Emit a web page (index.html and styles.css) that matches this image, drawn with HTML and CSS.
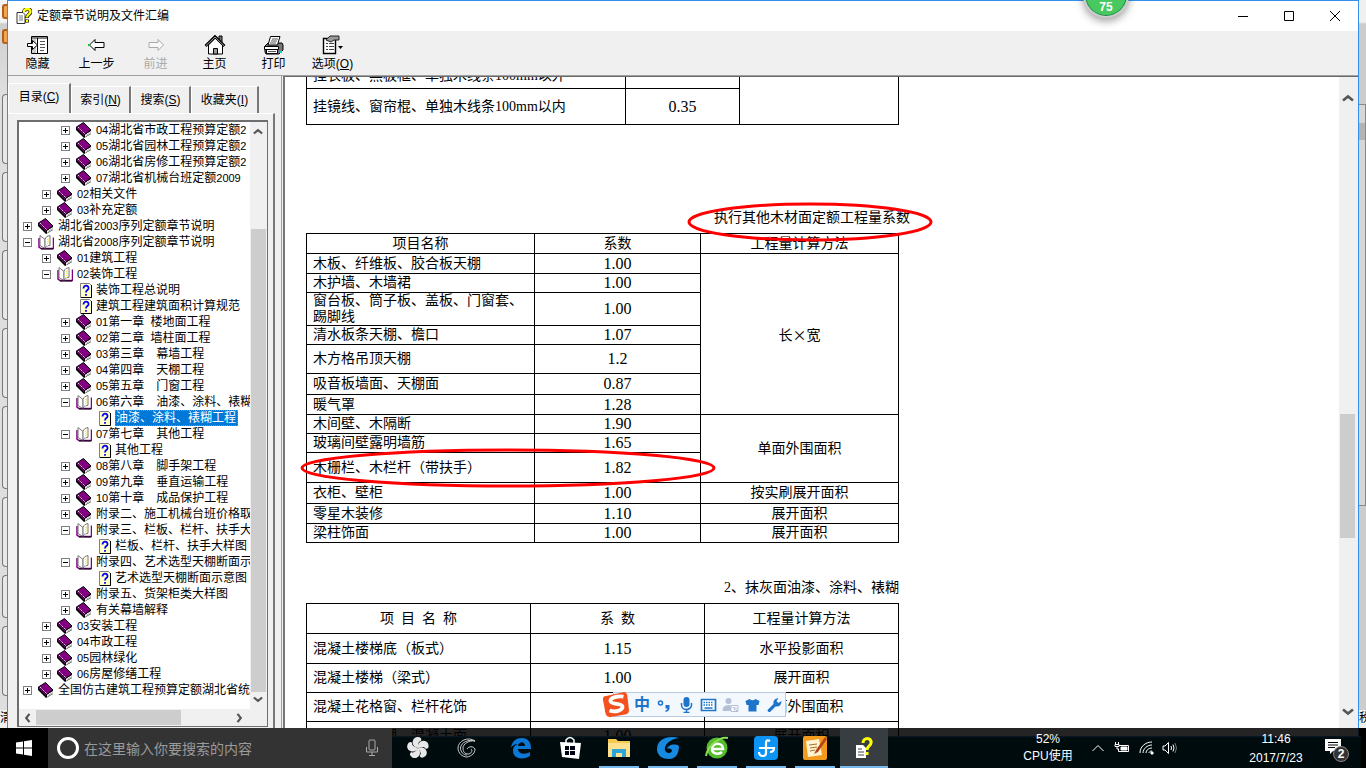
FILE: index.html
```html
<!DOCTYPE html>
<html lang="zh-CN">
<head>
<meta charset="utf-8">
<title>定额章节说明及文件汇编</title>
<link rel="stylesheet" href="styles.css">
</head>
<body>
<svg class="defs" aria-hidden="true">
  <symbol id="book" viewBox="0 0 16 16">
    <path d="M0 5v3l8 8 7-4V8z" fill="#000"/>
    <path d="M9 12.500l6-3.500v2.500L9 15z" fill="#fff"/>
    <path d="M10 13.500l5-3" stroke="#888" stroke-width=".7"/>
    <path d="M.5 5L7.500.5 15 8l-6.500 4.500z" fill="#800080" stroke="#000"/>
    <path d="M1 6.500l7 7.500v-1.500L1 5z" fill="#800080"/>
    <path d="M2 5l7 7" stroke="#fff" stroke-width=".9" stroke-dasharray="1.300 1"/>
  </symbol>
  <symbol id="open" viewBox="0 0 16 16">
    <path d="M1 4v9l2 1.500h12.500V3.500" fill="#fff" stroke="#800080" stroke-width="1.500"/>
    <path d="M2 1.500l5 4v9l-5-3z" fill="#fff" stroke="#777"/>
    <path d="M7 5.500c1-3 2-3 5-4v10c-3 0-4 .500-5 3z" fill="#fff" stroke="#777"/>
    <path d="M9.500 5v7M10.500 4.500v6" stroke="#f0e650" stroke-dasharray="1 1"/>
    <path d="M3 15h12" stroke="#000"/>
  </symbol>
  <symbol id="page" viewBox="0 0 16 16">
    <path d="M4.500 1.500h9l2 2v12h-11z" fill="#ffffc8" stroke="#808080"/>
    <path d="M15.500 3v12.500H5" fill="none" stroke="#000"/>
    <path d="M7.500 6.500c0-4 5.500-3.500 5 0-.3 1.800-2.500 1.500-2.500 4M10 12v1.800" fill="none" stroke="#00f" stroke-width="1.800"/>
  </symbol>
  <symbol id="help" viewBox="0 0 16 16">
    <path d="M1 4.500h6l2 2v9H1z" fill="#fff" stroke="#333"/>
    <path d="M3 8h4M3 10h4M3 12h4" stroke="#777"/>
    <path d="M8 4c0-4 7-4 6.500 0-.3 2.500-3.500 2.500-3.500 6M11 11.500v3" fill="none" stroke="#000" stroke-width="3.800"/>
    <path d="M8 4c0-4 7-4 6.500 0-.3 2.500-3.500 2.500-3.500 5.500M11 12v2" fill="none" stroke="#ff0" stroke-width="2.400"/>
  </symbol>
  <symbol id="up" viewBox="0 0 12 8"><path d="M1 7l5-4 5 4" fill="none" stroke="#555" stroke-width="2.600"/></symbol>
  <symbol id="mic" viewBox="0 0 14 18">
    <rect x="4" y="1" width="6" height="10" rx="1"/><path d="M1.500 8v5h11V8M7 13v4M4 16.500h6" fill="none"/>
  </symbol>
</svg>

<div class="desktop">
  <div class="back back-left">
    <i class="chip"></i><i class="chip"></i>
    <div class="slots"><i></i><i></i><i></i><i></i><i class="tall"></i><i></i><i class="short"></i><i></i></div>
    <span class="cut">清</span>
  </div>

  <main class="window">
    <header class="titlebar">
      <svg class="i16"><use href="#help"/></svg>
      <h1>定额章节说明及文件汇编</h1>
      <div class="winbtns">
        <button aria-label="最小化"><svg viewBox="0 0 12 12"><path d="M1 6.500h10"/></svg></button>
        <button aria-label="最大化"><svg viewBox="0 0 12 12"><path d="M1.500 1.500h9v9h-9z"/></svg></button>
        <button aria-label="关闭"><svg viewBox="0 0 12 12"><path d="M1 1l10 10M11 1L1 11"/></svg></button>
      </div>
    </header>

    <nav class="toolbar">
      <button><svg viewBox="0 0 22 20"><path d="M4.500 1.500h16v17h-16z" fill="#fff" stroke="#000"/><path d="M5 3h15M10.500 3v15" stroke="#000"/><path d="M6 3v15M8 3v15" stroke="#999"/><path d="M13 6.500h5M13 9.500h5M13 12.500h5M13 15.500h4" stroke="#555"/><path d="M.5 8.500h5v-3l5 4.500-5 4.500v-3h-5z" fill="#fff" stroke="#000"/></svg><span>隐藏</span></button>
      <button><svg viewBox="0 0 22 20"><path d="M3.500 10l5.500-5.500v3h9v5H9v3z" fill="#fff" stroke="#000"/><path d="M2 9h2v2H2z" fill="#0c2"/></svg><span>上一步</span></button>
      <button disabled><svg viewBox="0 0 22 20"><path d="M18.500 10L13 4.500v3H4v5h9v3z" fill="#f8f8f8" stroke="#aaa"/></svg><span>前进</span></button>
      <button><svg viewBox="0 0 22 20"><path d="M15 1h3v8h-3z" fill="#777" stroke="#000"/><path d="M4.500 10v9h14v-9L11.500 3z" fill="#fff" stroke="#000"/><path d="M1.500 11L11 1.500l9.500 9.500" fill="none" stroke="#000" stroke-width="2.600"/><path d="M2 10.700L11 2l9 8.700" fill="none" stroke="#999"/><path d="M9.500 13.500h4V19h-4z" fill="#999" stroke="#000"/></svg><span>主页</span></button>
      <button><svg viewBox="0 0 22 20"><path d="M2 11l3-3h14l1 2v5l-4 4H3l-1-2z" fill="#777" stroke="#000"/><path d="M1.500 11.500h14v3h-14zM3.500 14.500h11v4h-11z" fill="#fff" stroke="#000"/><path d="M5 10L7.500 1.500H17L14.500 10z" fill="#fff" stroke="#000"/><path d="M9 4h6M8 6h6M7 8h6M5 16.500h8" stroke="#555"/><path d="M17 16h2v2h-2z" fill="#0dd"/></svg><span>打印</span></button>
      <button><svg viewBox="0 0 22 20"><path d="M1.500 3.500h12v15h-12z" fill="#fff" stroke="#000" stroke-width="1.400"/><path d="M4 8.500h2M7 8.500h5M4 11.500h2M7 11.500h5M4 14.500h2M7 14.500h5" stroke="#444"/><path d="M4 5l4-4h9v4h-5L9 7z" fill="#999" stroke="#222"/><path d="M16 11h5l-2.500 3z"/></svg><span>选项(<u>O</u>)</span></button>
    </nav>

    <div class="panes">
      <aside class="side">
        <div class="tabs" role="tablist">
          <button role="tab" aria-selected="true">目录(<u>C</u>)</button>
          <button role="tab">索引(<u>N</u>)</button>
          <button role="tab">搜索(<u>S</u>)</button>
          <button role="tab">收藏夹(<u>I</u>)</button>
        </div>
        <div class="tabpanel">
          <div class="treebox">
            <ul class="tree">
              <li class="l2"><button class="ex plus"></button><svg><use href="#book"/></svg><span><b>04</b>湖北省市政工程预算定额<b>2</b></span></li>
              <li class="l2"><button class="ex plus"></button><svg><use href="#book"/></svg><span><b>05</b>湖北省园林工程预算定额<b>2</b></span></li>
              <li class="l2"><button class="ex plus"></button><svg><use href="#book"/></svg><span><b>06</b>湖北省房修工程预算定额<b>2</b></span></li>
              <li class="l2"><button class="ex plus"></button><svg><use href="#book"/></svg><span><b>07</b>湖北省机械台班定额<b>2009</b></span></li>
              <li class="l1"><button class="ex plus"></button><svg><use href="#book"/></svg><span><b>02</b>相关文件</span></li>
              <li class="l1"><button class="ex plus"></button><svg><use href="#book"/></svg><span><b>03</b>补充定额</span></li>
              <li><button class="ex plus"></button><svg><use href="#book"/></svg><span>湖北省<b>2003</b>序列定额章节说明</span></li>
              <li><button class="ex"></button><svg><use href="#open"/></svg><span>湖北省<b>2008</b>序列定额章节说明</span></li>
              <li class="l1"><button class="ex plus"></button><svg><use href="#book"/></svg><span><b>01</b>建筑工程</span></li>
              <li class="l1"><button class="ex"></button><svg><use href="#open"/></svg><span><b>02</b>装饰工程</span></li>
              <li class="l2 leaf"><svg><use href="#page"/></svg><span>装饰工程总说明</span></li>
              <li class="l2 leaf"><svg><use href="#page"/></svg><span>建筑工程建筑面积计算规范</span></li>
              <li class="l2"><button class="ex plus"></button><svg><use href="#book"/></svg><span><b>01</b>第一章<b>&nbsp; </b>楼地面工程</span></li>
              <li class="l2"><button class="ex plus"></button><svg><use href="#book"/></svg><span><b>02</b>第二章<b>&nbsp; </b>墙柱面工程</span></li>
              <li class="l2"><button class="ex plus"></button><svg><use href="#book"/></svg><span><b>03</b>第三章　幕墙工程</span></li>
              <li class="l2"><button class="ex plus"></button><svg><use href="#book"/></svg><span><b>04</b>第四章　天棚工程</span></li>
              <li class="l2"><button class="ex plus"></button><svg><use href="#book"/></svg><span><b>05</b>第五章　门窗工程</span></li>
              <li class="l2"><button class="ex"></button><svg><use href="#open"/></svg><span><b>06</b>第六章　油漆、涂料、裱糊</span></li>
              <li class="l3 leaf"><svg><use href="#page"/></svg><span class="selected">油漆、涂料、裱糊工程</span></li>
              <li class="l2"><button class="ex"></button><svg><use href="#open"/></svg><span><b>07</b>第七章　其他工程</span></li>
              <li class="l3 leaf"><svg><use href="#page"/></svg><span>其他工程</span></li>
              <li class="l2"><button class="ex plus"></button><svg><use href="#book"/></svg><span><b>08</b>第八章　脚手架工程</span></li>
              <li class="l2"><button class="ex plus"></button><svg><use href="#book"/></svg><span><b>09</b>第九章　垂直运输工程</span></li>
              <li class="l2"><button class="ex plus"></button><svg><use href="#book"/></svg><span><b>10</b>第十章　成品保护工程</span></li>
              <li class="l2"><button class="ex plus"></button><svg><use href="#book"/></svg><span>附录二、施工机械台班价格取</span></li>
              <li class="l2"><button class="ex"></button><svg><use href="#open"/></svg><span>附录三、栏板、栏杆、扶手大</span></li>
              <li class="l3 leaf"><svg><use href="#page"/></svg><span>栏板、栏杆、扶手大样图</span></li>
              <li class="l2"><button class="ex"></button><svg><use href="#open"/></svg><span>附录四、艺术选型天棚断面示</span></li>
              <li class="l3 leaf"><svg><use href="#page"/></svg><span>艺术选型天棚断面示意图</span></li>
              <li class="l2"><button class="ex plus"></button><svg><use href="#book"/></svg><span>附录五、货架柜类大样图</span></li>
              <li class="l2"><button class="ex plus"></button><svg><use href="#book"/></svg><span>有关幕墙解释</span></li>
              <li class="l1"><button class="ex plus"></button><svg><use href="#book"/></svg><span><b>03</b>安装工程</span></li>
              <li class="l1"><button class="ex plus"></button><svg><use href="#book"/></svg><span><b>04</b>市政工程</span></li>
              <li class="l1"><button class="ex plus"></button><svg><use href="#book"/></svg><span><b>05</b>园林绿化</span></li>
              <li class="l1"><button class="ex plus"></button><svg><use href="#book"/></svg><span><b>06</b>房屋修缮工程</span></li>
              <li><button class="ex plus"></button><svg><use href="#book"/></svg><span>全国仿古建筑工程预算定额湖北省统</span></li>
            </ul>
            <div class="vbar"><svg><use href="#up"/></svg><i class="space"></i><i class="thumb"></i><i class="rest"></i><svg class="down"><use href="#up"/></svg></div>
            <div class="hbar"><svg class="left"><use href="#up"/></svg><i class="thumb"></i><svg class="right"><use href="#up"/></svg></div>
          </div>
        </div>
      </aside>

      <section class="doc">
        <div class="paper">
          <table class="t1">
            <colgroup><col class="c1"><col class="c2"><col class="c3"></colgroup>
            <tr class="h26"><td>挂衣板、黑板框、单独木线条100mm以外</td><td class="num"></td><td rowspan="2"></td></tr>
            <tr class="h36"><td>挂镜线、窗帘棍、单独木线条100mm以内</td><td class="num">0.35</td></tr>
          </table>

          <div class="block">
            <h2 class="cap wide">执行其他木材面定额工程量系数</h2>
            <table class="t2">
              <colgroup><col class="c1"><col class="c2"><col class="c3"></colgroup>
              <tr class="h20"><th>项目名称</th><th>系数</th><th>工程量计算方法</th></tr>
              <tr class="h20"><td>木板、纤维板、胶合板天棚</td><td class="num">1.00</td><td class="mid cjk" rowspan="7">长×宽</td></tr>
              <tr class="h19"><td>木护墙、木墙裙</td><td class="num">1.00</td></tr>
              <tr class="h33"><td>窗台板、筒子板、盖板、门窗套、<br>踢脚线</td><td class="num">1.00</td></tr>
              <tr class="h19"><td>清水板条天棚、檐口</td><td class="num">1.07</td></tr>
              <tr class="h29"><td>木方格吊顶天棚</td><td class="num">1.2</td></tr>
              <tr class="h21"><td>吸音板墙面、天棚面</td><td class="num">0.87</td></tr>
              <tr class="h20"><td>暖气罩</td><td class="num">1.28</td></tr>
              <tr class="h19"><td>木间壁、木隔断</td><td class="num">1.90</td><td class="mid" rowspan="3">单面外围面积</td></tr>
              <tr class="h19"><td>玻璃间壁露明墙筋</td><td class="num">1.65</td></tr>
              <tr class="h30"><td>木栅栏、木栏杆（带扶手）</td><td class="num">1.82</td></tr>
              <tr class="h21"><td>衣柜、壁柜</td><td class="num">1.00</td><td class="mid">按实刷展开面积</td></tr>
              <tr class="h20"><td>零星木装修</td><td class="num">1.10</td><td class="mid">展开面积</td></tr>
              <tr class="h19"><td>梁柱饰面</td><td class="num">1.00</td><td class="mid">展开面积</td></tr>
            </table>
            <svg class="ring ring-a" viewBox="0 0 246 42"><ellipse cx="123" cy="21" rx="121" ry="18"/></svg>
            <svg class="ring ring-b" viewBox="0 0 416 42"><ellipse cx="208" cy="21" rx="206" ry="18"/></svg>
          </div>

          <div class="block second">
            <h2 class="cap">2、抹灰面油漆、涂料、裱糊</h2>
            <table class="t3">
              <colgroup><col class="c1"><col class="c2"><col class="c3"></colgroup>
              <tr class="h30"><th>项&nbsp; 目&nbsp; 名&nbsp; 称</th><th>系&nbsp; 数</th><th>工程量计算方法</th></tr>
              <tr class="h30"><td>混凝土楼梯底（板式）</td><td class="num">1.15</td><td class="mid">水平投影面积</td></tr>
              <tr class="h29"><td>混凝土楼梯（梁式）</td><td class="num">1.00</td><td class="mid">展开面积</td></tr>
              <tr class="h29"><td>混凝土花格窗、栏杆花饰</td><td class="num">1.82</td><td class="mid">单面外围面积</td></tr>
              <tr class="h29"><td>楼地面、天棚、混凝土面</td><td class="num">1.00</td><td class="mid">展开面积</td></tr>
            </table>
          </div>
        </div>
        <div class="vbar big"><svg><use href="#up"/></svg><i class="space"></i><i class="thumb"></i><i class="rest"></i><svg class="down"><use href="#up"/></svg></div>
      </section>
    </div>
  </main>

  <div class="back back-right"><i class="frame"></i><span class="cut">税</span></div>

  <div class="ball">75</div>

  <div class="ime">
    <svg class="logo" viewBox="0 0 30 30"><path d="M2 6L24 1q2 0 3 3l2 17q0 3-3 4L8 28q-3 0-4-3L1 9q0-2 1-3z" fill="#f4511e"/><path d="M23 6c-6-1-14 1-14 4.500 0 5 13 1.500 13 6.500 0 4-8 6-14 4" fill="none" stroke="#fff" stroke-width="4"/></svg>
    <button>中</button>
    <button aria-label="标点"><svg viewBox="0 0 16 16"><circle cx="4" cy="6" r="2" fill="none" stroke="#1e74c8" stroke-width="1.500"/><path d="M9 8h4v3q0 3-4 4v-1.500q2-.5 2-2H9z"/></svg></button>
    <button aria-label="语音"><svg viewBox="0 0 16 16"><rect x="5" y="0" width="6" height="10" rx="3"/><path d="M3 6v2a5 4.500 0 0 0 10 0V6M8 13v2.500M5 15.500h6" fill="none" stroke="#1e74c8" stroke-width="1.500"/></svg></button>
    <button aria-label="键盘"><svg viewBox="0 0 16 16"><path d="M1 2.500h14v11H1z" fill="#fff" stroke="#1e74c8" stroke-width="1.700"/><path d="M3 5.500h10M3 8h10" stroke="#1e74c8" stroke-width="1.500" stroke-dasharray="1.500 1"/><path d="M4 11h8" stroke="#1e74c8" stroke-width="1.500"/></svg></button>
    <button aria-label="登录"><svg viewBox="0 0 16 16" class="pale"><circle cx="6" cy="4" r="3"/><path d="M0 14q0-6 6-6 3 0 4 2v4z"/><path d="M8.500 8.500h7v6h-7z" fill="#fff" stroke="#b5bfd6"/><path d="M10 10.500h2v3M13.500 10v3.500h1.500" fill="none" stroke="#b5bfd6"/></svg></button>
    <button aria-label="皮肤"><svg viewBox="0 0 16 16"><path d="M5 2q3 2.500 6 0l4 2-1 4h-2v6.500H4V8H2L1 4z"/></svg></button>
    <button aria-label="工具"><svg viewBox="0 0 16 16"><path d="M1 13l6-6Q6 2 12 1L10 4l2 2 3-2q0 6-6 5.500L3.500 15Q1 15.500 1 13z"/></svg></button>
  </div>

  <footer class="taskbar">
    <button class="start" aria-label="开始"><svg viewBox="0 0 16 16"><path d="M0 2.500l7-1v6H0zM8 1.300L16 0v7.500H8zM0 8.500h7v6l-7-1zM8 8.500h8V16l-8-1.300z"/></svg></button>
    <label class="search"><i class="cortana"></i><input type="text" placeholder="在这里输入你要搜索的内容"><svg class="mic"><use href="#mic"/></svg></label>
    <div class="apps">
      <button><svg viewBox="0 0 24 24"><path d="M12 12C5 11 5 2 11 1c4 0 5 2 4 4-3 0-3 4-3 7z" id="petal" fill="#e8e8e8"/><use href="#petal" transform="rotate(72 12 12)"/><use href="#petal" transform="rotate(144 12 12)"/><use href="#petal" transform="rotate(216 12 12)"/><use href="#petal" transform="rotate(288 12 12)"/></svg></button>
      <button class="wide-gap"><svg viewBox="0 0 24 24"><path d="M20 5C13 0 3 5 3 12c0 5 4 9 9 9 5-1 8-4 8-8-2-3-6-3-8 0M20 5C14 4 8 8 8 12c0 4 2 6 5 6s5-3 3-5M20 5C14 3 6 6 5.500 12c0 4 3 7 6.500 7" fill="none" stroke="#ccc" stroke-width="1"/></svg></button>
      <button><svg viewBox="0 0 24 24"><path d="M2 12C3 5 7 2 13 2c6 0 9 4 9 11H9c0 5 7 6 12 3v4c-8 5-17 2-17-5 0-4 2-6 5-7-4 0-6 2-7 4zm7-2h7c0-5-6-5-7 0z" fill="#0b78d7"/></svg></button>
      <button><svg viewBox="0 0 24 24"><path d="M8 7V4q4-5 8 0v3" fill="none" stroke="#fff" stroke-width="1.500"/><path d="M2 6l21 1-2 16-17-2z" fill="#fff"/><path d="M7 10h4v4H7zM12 10h5v4h-5zM7 15h4v4H7zM12 15h5v4h-5z" fill="#001"/></svg></button>
      <button class="run"><svg viewBox="0 0 24 24"><path d="M1 3h8l2 2h12v16H1z" fill="#f6c94e"/><path d="M1 7h22v14H1z" fill="#ffe08c"/><path d="M5 21v-8h14v8h-4v-4H9v4z" fill="#2ea5d8"/></svg></button>
      <button class="run"><svg viewBox="0 0 24 24"><path d="M23 2C12-1 1 3 1 13c0 7 6 10 12 10 7 0 10-6 10-13-5-3-11-1-12 3 2-1 4 0 5 1 0 4-6 4-7 0-1-6 6-11 14-12z" fill="#1689e0"/></svg></button>
      <button class="run"><svg viewBox="0 0 24 24"><circle cx="12" cy="12" r="10.500" fill="#53bd2c"/><path d="M7 13h11c0-7-11-7-11 0 0 5 7 6 10 3" fill="none" stroke="#fff" stroke-width="2.600"/><path d="M1 20C3 9 15 0 23 2" fill="none" stroke="#8cdb55" stroke-width="2"/></svg></button>
      <button class="run"><svg viewBox="0 0 24 24"><rect width="24" height="24" rx="4" fill="#0d93f2"/><path d="M16 5q-4-2-4 2v10q0 3-3 3-4 0-4-4M5 12h15q0 4-4 4" fill="none" stroke="#fff" stroke-width="2.200"/></svg></button>
      <button class="run"><svg viewBox="0 0 24 24"><rect width="24" height="24" rx="2" fill="#f39a1e"/><path d="M3 5l13-2 3 16-14 2z" fill="#fff3d0"/><path d="M6 9l8-1M7 12l7-1M7 15l5-1" stroke="#a5702a"/><path d="M22 1l-9 13-2 4 4-2 9-13z" fill="#b5431b"/></svg></button>
      <button class="run active"><svg viewBox="0 0 24 24"><path d="M4 9h7l3 3v10H4z" fill="#fff"/><path d="M6 13h4M6 16h6M6 19h6" stroke="#444"/><path d="M11 7c0-6 9-6 8 0 0 3-4 3-4 7M15 16v3" fill="none" stroke="#ff0" stroke-width="3"/></svg></button>
    </div>
    <div class="cpu"><span>52%</span><span>CPU使用</span></div>
    <div class="tray">
      <svg viewBox="0 0 16 16"><path d="M2.500 11L8 5.500l5.500 5.500"/></svg>
      <svg viewBox="0 0 16 16"><path d="M5 5.500h9.500v6H4.500V9"/><path d="M7 7h6v3H7z" fill="#fff"/><path d="M1.500 2v2M4.500 2v2M1 4.500h4v2H1zM3 7v2h2"/></svg>
      <svg viewBox="0 0 16 16"><path d="M2 13C2 7 7 2 14 2M5 13c0-4 4-8 9-8M8 13c0-3 3-5 6-5M11 13c0-1 1-2 3-2"/><path d="M13 12h2v2h-2z" fill="#fff"/></svg>
      <svg viewBox="0 0 16 16"><path d="M1 6h2l3.500-3.500v11L3 10H1zM9 6q1 2 0 4M11 4.500q2 3.500 0 7"/><path d="M13 3q3 5 0 10" stroke="#777"/></svg>
    </div>
    <div class="clock"><span>11:46</span><span>2017/7/23</span></div>
    <div class="note"><svg viewBox="0 0 16 16"><path d="M0 0h16v12H8l-3 3v-3H0z" fill="#fff"/><path d="M3 3.500h10M3 6h10M3 8.500h7" stroke="#000"/></svg><b>2</b></div>
  </footer>
</div>
</body>
</html>
```

FILE: styles.css
```css
* { box-sizing: border-box; }
body {
  margin: 0;
  font: 12px/16px "Liberation Sans", "Noto Sans CJK SC", sans-serif;
  color: #000;
  background: #000;
}
button { margin: 0; padding: 0; border: 0; background: none; font: inherit; color: inherit; }
i { font-style: normal; }
svg { display: block; flex: none; }
.defs { position: absolute; width: 0; height: 0; }

.desktop {
  position: relative;
  display: grid;
  grid-template: minmax(0, 1fr) 40px / 7px minmax(0, 1fr) 7px;
  height: 100vh;
  overflow: hidden;
}

/* windows behind */
.back { background: #d6d6d6; overflow: hidden; display: flex; flex-direction: column; }
.back-left { background: linear-gradient(#f4f4f4 22px, #cfcfcf 24px, #dedede 90px); padding-top: 4px; }
.chip { height: 15px; margin: 0 0 10px 2px; border: 2px solid #b0601c; border-right: 0; border-radius: 3px 0 0 3px; background: #f3a552; flex: none; }
.slots { display: flex; flex-direction: column; gap: 8px; margin: 40px 0 0 2px; flex: 1; }
.slots i { height: 70px; flex: none; border: 1px solid #777; border-right: 0; border-radius: 4px 0 0 4px; background: #e8e8e8; }
.slots .tall { height: 83px; }
.slots .short { height: 43px; }
.cut { height: 18px; margin-top: auto; background: #f0f0f0; white-space: nowrap; flex: none; }
.back-right { background: linear-gradient(#f0f0f0 22px, #ccc 24px); }
.frame { height: 402px; margin-top: 104px; border: 1px solid #888; border-left: 0; background: linear-gradient(#d6d6d6 18px, #b4b4b4 18px 35px, #d6d6d6 35px); }

.window {
  display: grid;
  grid-template-rows: 30px 45px minmax(0, 1fr);
  margin-bottom: -8px;
  border: 1px solid #3391ee;
  border-bottom: 0;
  background: #f0f0f0;
  min-width: 0;
}
.titlebar { display: flex; align-items: center; gap: 5px; padding-left: 8px; background: #fff; }
.titlebar h1 { margin: 0; font-size: 12px; font-weight: 400; flex: 1; }
.i16 { width: 16px; height: 16px; }
.winbtns { display: flex; }
.winbtns button { width: 46px; height: 28px; display: grid; place-items: center; }
.winbtns svg { width: 12px; height: 12px; fill: none; stroke: #000; }

.toolbar { display: flex; border-bottom: 1px solid #a0a0a0; }
.toolbar button { width: 59px; display: flex; flex-direction: column; align-items: center; gap: 1px; padding-top: 4px; }
.toolbar svg { width: 22px; height: 20px; }
.toolbar button:disabled { color: #aaa; }

.panes { display: grid; grid-template-columns: 274px minmax(0, 1fr); min-height: 0; }
.side { display: flex; flex-direction: column; padding: 7px 6px 8px 0; min-height: 0; border-right: 1px solid #a0a0a0; }
.tabs { display: flex; align-items: flex-end; height: 30px; }
.tabs button { height: 27px; width: 60px; border-right: 2px solid #777; border-top: 1px solid #fff; border-left: 1px solid #fff; }
.tabs button:first-child { height: 30px; width: 63px; padding-bottom: 4px; }
.tabs button:last-child { width: 68px; }
.tabpanel { flex: 1; min-height: 0; padding: 6px 5px 1px 9px; border-top: 1px solid #fff; border-right: 2px solid #777; }
.treebox {
  height: 100%;
  display: grid;
  grid-template: minmax(0, 1fr) 17px / minmax(0, 1fr) 16px;
  border: 2px solid #6e6e6e;
  border-right-width: 1px;
  border-bottom-width: 1px;
  padding-right: 1px;
  background: #f0f0f0;
}
.tree { margin: 0; padding: 0; list-style: none; overflow: hidden; background: #fff; }
.tree li { display: flex; align-items: center; height: 16px; padding-left: 4px; white-space: nowrap; }
.tree .l1 { padding-left: 23px; }
.tree .l2 { padding-left: 42px; }
.tree .l3 { padding-left: 61px; }
.tree .leaf::before { content: ""; width: 9px; flex: none; }
.tree svg { width: 16px; height: 16px; margin: 0 4px 0 6px; }
.tree b { font-weight: 400; font-size: 11px; }
.ex {
  width: 9px; height: 9px; flex: none;
  border: 1px solid #808080;
  background: linear-gradient(#000, #000) center / 5px 1px no-repeat #fff;
}
.ex.plus { background: linear-gradient(#000, #000) center / 5px 1px no-repeat, linear-gradient(#000, #000) center / 1px 5px no-repeat #fff; }
.selected { background: #0078d7; color: #fff; outline: 1px dotted #d87a28; outline-offset: -1px; padding: 0 2px 0 1px; }

.vbar { display: flex; flex-direction: column; align-items: center; background: #f0f0f0; padding: 5px 0; }
.vbar svg, .hbar svg { width: 10px; height: 8px; }
.down { transform: rotate(180deg); }
.left { transform: rotate(-90deg); }
.right { transform: rotate(90deg); }
.thumb { background: #cdcdcd; }
.vbar .thumb { width: 15px; flex: 462; }
.vbar .space { flex: 94; }
.vbar .rest { flex: 4; }
.hbar { display: flex; align-items: center; justify-content: space-between; padding: 0 5px 0 3px; }
.hbar .thumb { width: 145px; height: 15px; margin: 0 auto 0 4px; }

.doc { display: grid; grid-template-columns: minmax(0, 1fr) 19px; border-left: 2px solid #777; border-top: 1px solid #696969; margin-left: 1px; overflow: hidden; background: #fff; min-height: 0; }
.paper { padding-left: 21px; overflow: hidden; font: 14px/16px "Liberation Serif", "Noto Sans CJK SC", serif; }
.big { padding: 16px 2px 19px 0; }
.big svg { width: 12px; height: 9px; }
.big .space { flex: 310; }
.big .thumb { flex: 124; }
.big .rest { flex: 169; }

table { border-collapse: collapse; table-layout: fixed; width: 593px; }
td, th { border: 1px solid #000; padding: 0 0 0 6px; font-weight: 400; text-align: left; white-space: nowrap; line-height: 16px; }
th, td.mid, td.num { text-align: center; padding: 0; }
.num { font-size: 16px; }
.cjk { font-family: "Noto Sans CJK SC", sans-serif; }
.t1 { margin-top: -15px; }
.t1 .c1 { width: 319px; }
.t1 .c2 { width: 114px; }
.t2 .c1 { width: 228px; }
.t2 .c2 { width: 166px; }
.t3 .c1 { width: 224px; }
.t3 .c2 { width: 174px; }
.h19 { height: 19px; }
.h20 { height: 20px; }
.h21 { height: 21px; }
.h26 { height: 26px; }
.h29 { height: 29px; }
.h30 { height: 30px; }
.h33 { height: 33px; }
.h36 { height: 36px; }
.block { position: relative; width: 593px; padding-top: 83px; }
.second { padding-top: 35px; }
.cap { margin: 0 0 5px; font-size: 14px; font-weight: 400; line-height: 20px; text-align: right; }
.wide { margin-right: -11px; }
.ring { position: absolute; fill: none; stroke: #f00; stroke-width: 3; }
.ring-a { width: 246px; height: 42px; right: -34px; top: 76px; }
.ring-b { width: 416px; height: 42px; left: -6px; top: 322px; }

.ball {
  position: absolute; left: 1083px; top: -28px;
  width: 46px; height: 46px; border-radius: 50%;
  border: 2px solid #ccc; background: #48c95f;
  box-shadow: inset 0 0 0 1px #16864a, 0 3px 8px #0006;
  color: #fff; font-weight: 700; line-height: 66px; text-align: center;
}
.ime {
  position: absolute; z-index: 1; left: 601px; bottom: 51px; height: 25px;
  display: flex; align-items: center;
  color: #1e74c8; font-size: 16px; font-weight: 700;
}
.ime::before { content: ""; position: absolute; inset: 0 -1px 0 12px; background: #f3f8fe; border: 1px solid #b9cbe0; z-index: -1; }
.logo { width: 30px; height: 28px; }
.ime button { width: 22px; height: 22px; display: grid; place-items: center; }
.ime button svg { width: 17px; height: 16px; fill: #1e74c8; }
.ime button .pale { fill: #b5bfd6; }

.taskbar {
  grid-column: 1 / -1; position: relative; z-index: 2;
  display: flex; min-width: 0;
  background: linear-gradient(rgba(0, 0, 0, .86) 8px, #0a1a24 8px, #000b0e 10px);
  color: #fff;
}
.taskbar button { display: grid; place-items: center; }
.start { width: 48px; background: #000; }
.start svg { width: 16px; height: 16px; fill: #fff; }
.search { width: 344px; display: flex; align-items: center; background: #333; padding: 0 13px 0 9px; }
.cortana { width: 22px; height: 22px; border: 3px solid #fff; border-radius: 50%; flex: none; }
.search input { flex: 1; min-width: 0; border: 0; padding: 0 0 0 5px; background: none; color: #fff; font: 14px/20px "Noto Sans CJK SC", sans-serif; }
.search input::placeholder { color: #9a9a9a; opacity: 1; }
.mic { width: 14px; height: 18px; stroke: #aaa; fill: none; }
.apps { display: flex; gap: 1px; margin-left: 2px; }
.apps button { width: 48px; }
.apps .wide-gap { margin-right: 5px; }
.apps svg { width: 24px; height: 24px; }
.run { background: linear-gradient(#76b9ed, #76b9ed) center bottom / 40px 2px no-repeat; }
.apps .active { background: linear-gradient(#76b9ed, #76b9ed) center bottom / 48px 2px no-repeat #373d40; }
.cpu, .clock { display: flex; flex-direction: column; align-items: center; padding-top: 3px; line-height: 17px; }
.cpu { margin-left: auto; width: 60px; }
.tray { display: flex; align-items: center; gap: 8px; margin-left: 12px; }
.tray svg { width: 16px; height: 16px; fill: none; stroke: #fff; }
.clock { width: 80px; margin-left: 58px; padding-top: 2px; line-height: 19px; }
.note { position: relative; width: 50px; padding: 11px 0 0 9px; border-right: 5px solid #000; }
.note svg { width: 16px; height: 16px; }
.note b { position: absolute; left: 17px; top: 18px; width: 16px; height: 16px; border: 1px solid #888; border-radius: 50%; background: #333; line-height: 14px; text-align: center; }
```
